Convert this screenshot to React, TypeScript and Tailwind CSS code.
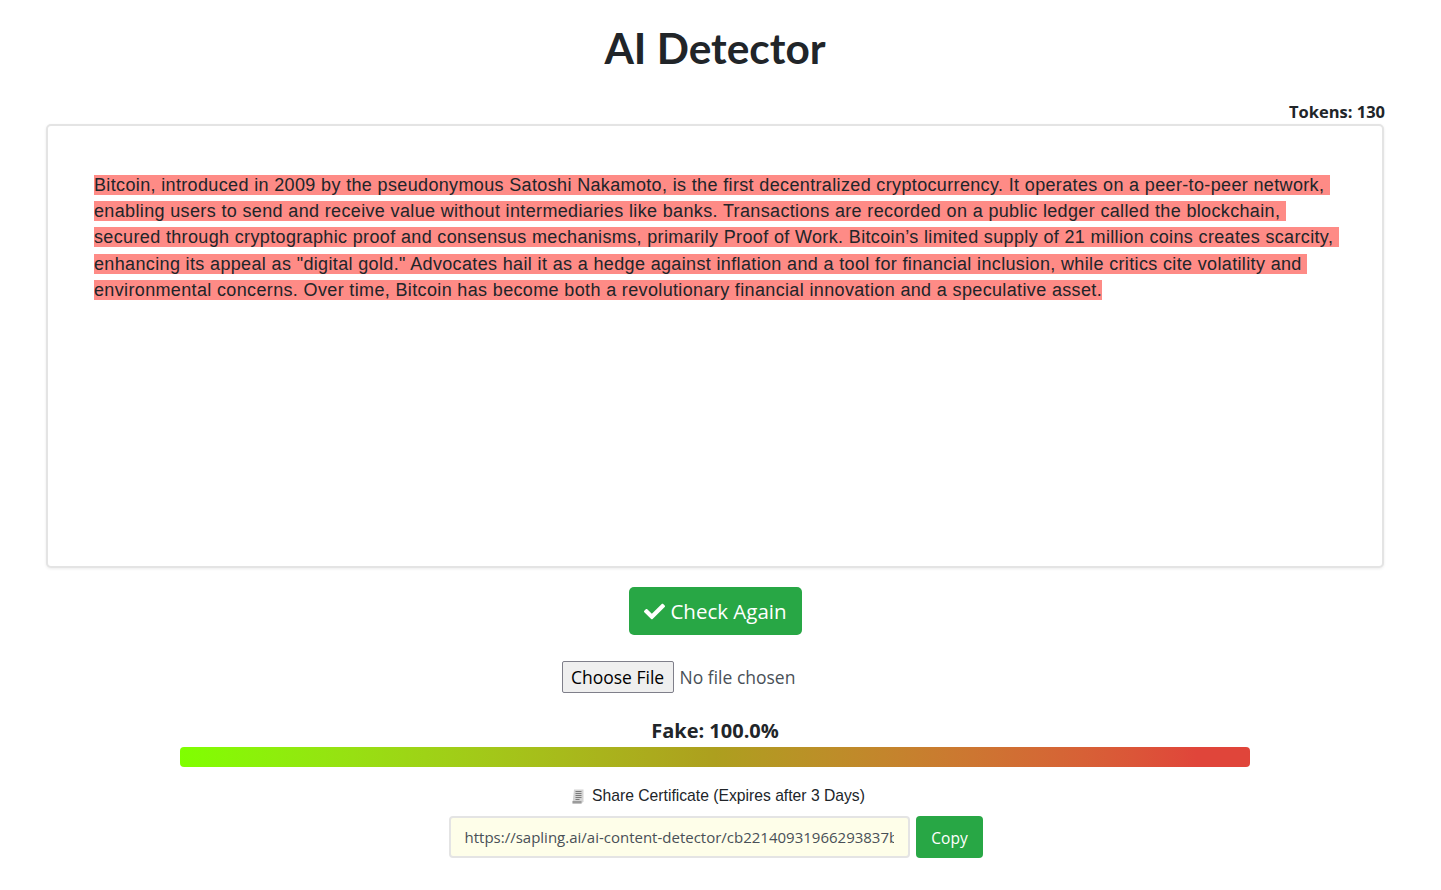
import React from "react";

const passage =
  'Bitcoin, introduced in 2009 by the pseudonymous Satoshi Nakamoto, is the first decentralized cryptocurrency. It operates on a peer-to-peer network, enabling users to send and receive value without intermediaries like banks. Transactions are recorded on a public ledger called the blockchain, secured through cryptographic proof and consensus mechanisms, primarily Proof of Work. Bitcoin’s limited supply of 21 million coins creates scarcity, enhancing its appeal as "digital gold." Advocates hail it as a hedge against inflation and a tool for financial inclusion, while critics cite volatility and environmental concerns. Over time, Bitcoin has become both a revolutionary financial innovation and a speculative asset.';

const shareUrl = "https://sapling.ai/ai-content-detector/cb22140931966293837b4f1e0a7d6c52";

function CheckIcon() {
  return (
    <svg viewBox="0 0 512 512" className="w-[21px] h-[21px] fill-white">
      <path d="M173.9 439.4l-166.4-166.4c-10-10-10-26.2 0-36.2l36.2-36.2c10-10 26.2-10 36.2 0L192 312.7 432.1 72.6c10-10 26.2-10 36.2 0l36.2 36.2c10 10 10 26.2 0 36.2l-294.4 294.4c-10 10-26.2 10-36.2 0z" />
    </svg>
  );
}

function ReceiptIcon() {
  return (
    <svg viewBox="0 0 12 15" className="w-3 h-[15px]">
      <path d="M2 0.500h9.500v12l-2 2h-9z" fill="#d4d4d4" />
      <path d="M0.500 12h9v2.500h-9z" fill="#9b9b9b" />
      <path d="M3.500 2.500h6M3.500 4.500h6M3.500 6.500h6M3.500 8.500h6M3.500 10.500h4" stroke="#7a7a7a" strokeWidth="1" />
    </svg>
  );
}

export default function App() {
  return (
    <div className="w-[1430px] min-h-[890px] bg-white text-[#212529] font-['Open_Sans','Noto_Sans',sans-serif]">
      <h1 className="pt-[19px] text-center text-[42.400px] leading-[58px] font-bold font-['Lato',sans-serif]">
        AI Detector
      </h1>

      <div className="mx-[46px] mt-[23px]">
        <div className="flex justify-end -mr-px text-[16.500px] leading-[24px] font-bold">Tokens: 130</div>
        <div className="h-[444px] rounded-[5px] border-2 border-[#e4e4e4] bg-white shadow-[0_1px_3px_rgba(0,0,0,0.08)] pl-[46px] pr-[40px] pt-[46px] pb-4 font-['Liberation_Sans',sans-serif] text-[18px] leading-[26.200px] tracking-[0.352px] whitespace-pre-wrap">
          {passage.split(" ").map((word, i, all) => (
            <span key={i} className="bg-[#fe8b86]">
              {word}
              {i < all.length - 1 ? " " : ""}
            </span>
          ))}
        </div>
      </div>

      <div className="mt-[19px] flex justify-center">
        <button className="flex h-12 w-[173px] items-center justify-center gap-[5px] rounded-[5px] bg-[#28a745] pl-px text-[20.500px] text-white">
          <CheckIcon />
          Check Again
        </button>
      </div>

      <div className="mt-[26px] flex h-8 items-center justify-center pr-[73px] text-[17.500px]">
        <button className="h-8 w-[112px] rounded-[2px] border border-[#7f7f8a] bg-[#efefef] pt-px text-black">Choose File</button>
        <span className="ml-[6px] pt-px text-[#495057]">No file chosen</span>
      </div>

      <p className="mt-[24px] text-center text-[20px] leading-[28px] font-bold">Fake: 100.0%</p>

      <div className="mx-[180px] mt-[2px] h-5 rounded-[4px] bg-gradient-to-r from-[#7fff00] via-[#ad9f1e] to-[#e0453a] to-95%" />

      <div className="mt-[19px] flex items-center justify-center gap-[8px] pl-[7px] font-['Liberation_Sans',sans-serif] text-[15.700px] leading-5">
        <ReceiptIcon />
        <span>Share Certificate (Expires after 3 Days)</span>
      </div>

      <div className="mt-[10px] flex justify-center gap-[6px] pl-[1px]">
        <input
          readOnly
          value={shareUrl}
          className="h-[42px] w-[461px] rounded-[4px] border-2 border-[#e4e4e4] bg-[#fefee9] px-[14px] text-[15px] text-[#495057] outline-none"
        />
        <button className="h-[42px] w-[67px] rounded-[4px] bg-[#28a745] pt-[3px] pl-px text-[15.500px] text-white">Copy</button>
      </div>
    </div>
  );
}
